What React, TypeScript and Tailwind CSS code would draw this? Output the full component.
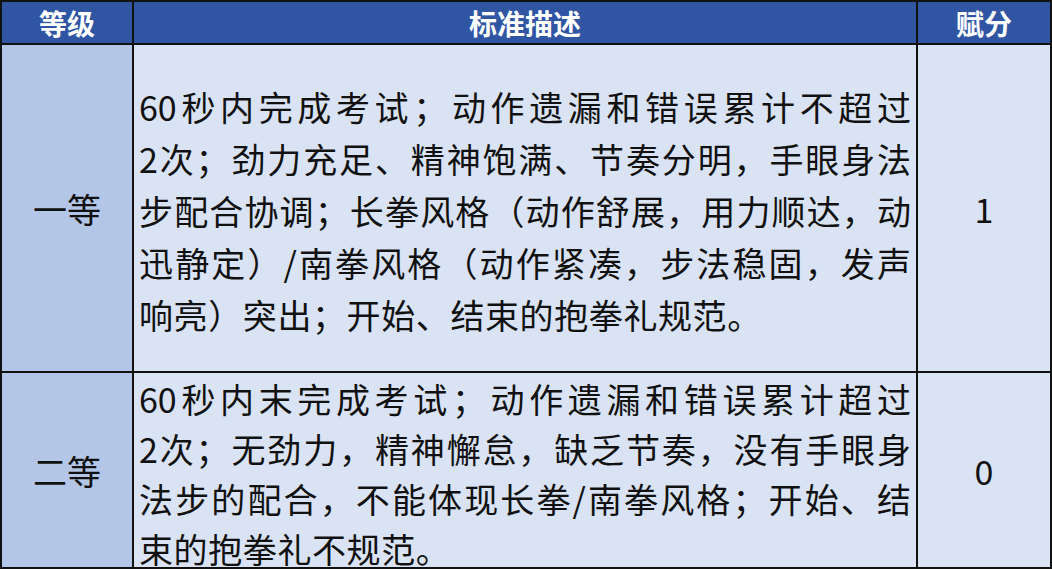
const FONT = "font-['Noto_Sans_CJK_SC','Noto_Sans',sans-serif]";

const rows = [
  {
    grade: "一等",
    score: "1",
    lines: [
      "60秒内完成考试；动作遗漏和错误累计不超过",
      "2次；劲力充足、精神饱满、节奏分明，手眼身法",
      "步配合协调；长拳风格（动作舒展，用力顺达，动",
      "迅静定）/南拳风格（动作紧凑，步法稳固，发声",
      "响亮）突出；开始、结束的抱拳礼规范。",
    ],
  },
  {
    grade: "二等",
    score: "0",
    lines: [
      "60秒内末完成考试；动作遗漏和错误累计超过",
      "2次；无劲力，精神懈怠，缺乏节奏，没有手眼身",
      "法步的配合，不能体现长拳/南拳风格；开始、结",
      "束的抱拳礼不规范。",
    ],
  },
];

function Line({ text, justify }: { text: string; justify: boolean }) {
  return (
    <div
      className={
        justify
          ? "text-justify [text-align-last:justify] whitespace-nowrap"
          : "text-left whitespace-nowrap tracking-[0.6px]"
      }
    >
      {text}
    </div>
  );
}

export default function App() {
  return (
    <div
      className={`w-[1052px] h-[569px] overflow-hidden bg-[#111] p-[2px] grid grid-cols-[130px_782px_1fr] grid-rows-[41px_326px_1fr] gap-[2px] ${FONT} text-[#111]`}
    >
      {/* header */}
      <div className="bg-[#2f55a3] text-white font-bold text-[28px] flex items-center justify-center">
        等级
      </div>
      <div className="bg-[#2f55a3] text-white font-bold text-[28px] flex items-center justify-center">
        标准描述
      </div>
      <div className="bg-[#2f55a3] text-white font-bold text-[28px] flex items-center justify-center">
        赋分
      </div>

      {/* row 1 */}
      <div className="bg-[#b4c6e7] text-[34px] flex items-center justify-center">
        {rows[0].grade}
      </div>
      <div className="bg-[#dae3f3] text-[34px] leading-[52px] flex flex-col justify-center px-[5px] pt-[6px] overflow-hidden">
        {rows[0].lines.map((l, i) => (
          <Line key={i} text={l} justify={i < rows[0].lines.length - 1} />
        ))}
      </div>
      <div className="bg-[#dae3f3] text-[34px] flex items-center justify-center">
        {rows[0].score}
      </div>

      {/* row 2 */}
      <div className="bg-[#b4c6e7] text-[34px] flex items-center justify-center">
        {rows[1].grade}
      </div>
      <div className="bg-[#dae3f3] text-[34px] leading-[50px] px-[5px] pt-[1px] overflow-hidden">
        {rows[1].lines.map((l, i) => (
          <Line key={i} text={l} justify={i < rows[1].lines.length - 1} />
        ))}
      </div>
      <div className="bg-[#dae3f3] text-[34px] flex items-center justify-center">
        {rows[1].score}
      </div>
    </div>
  );
}
